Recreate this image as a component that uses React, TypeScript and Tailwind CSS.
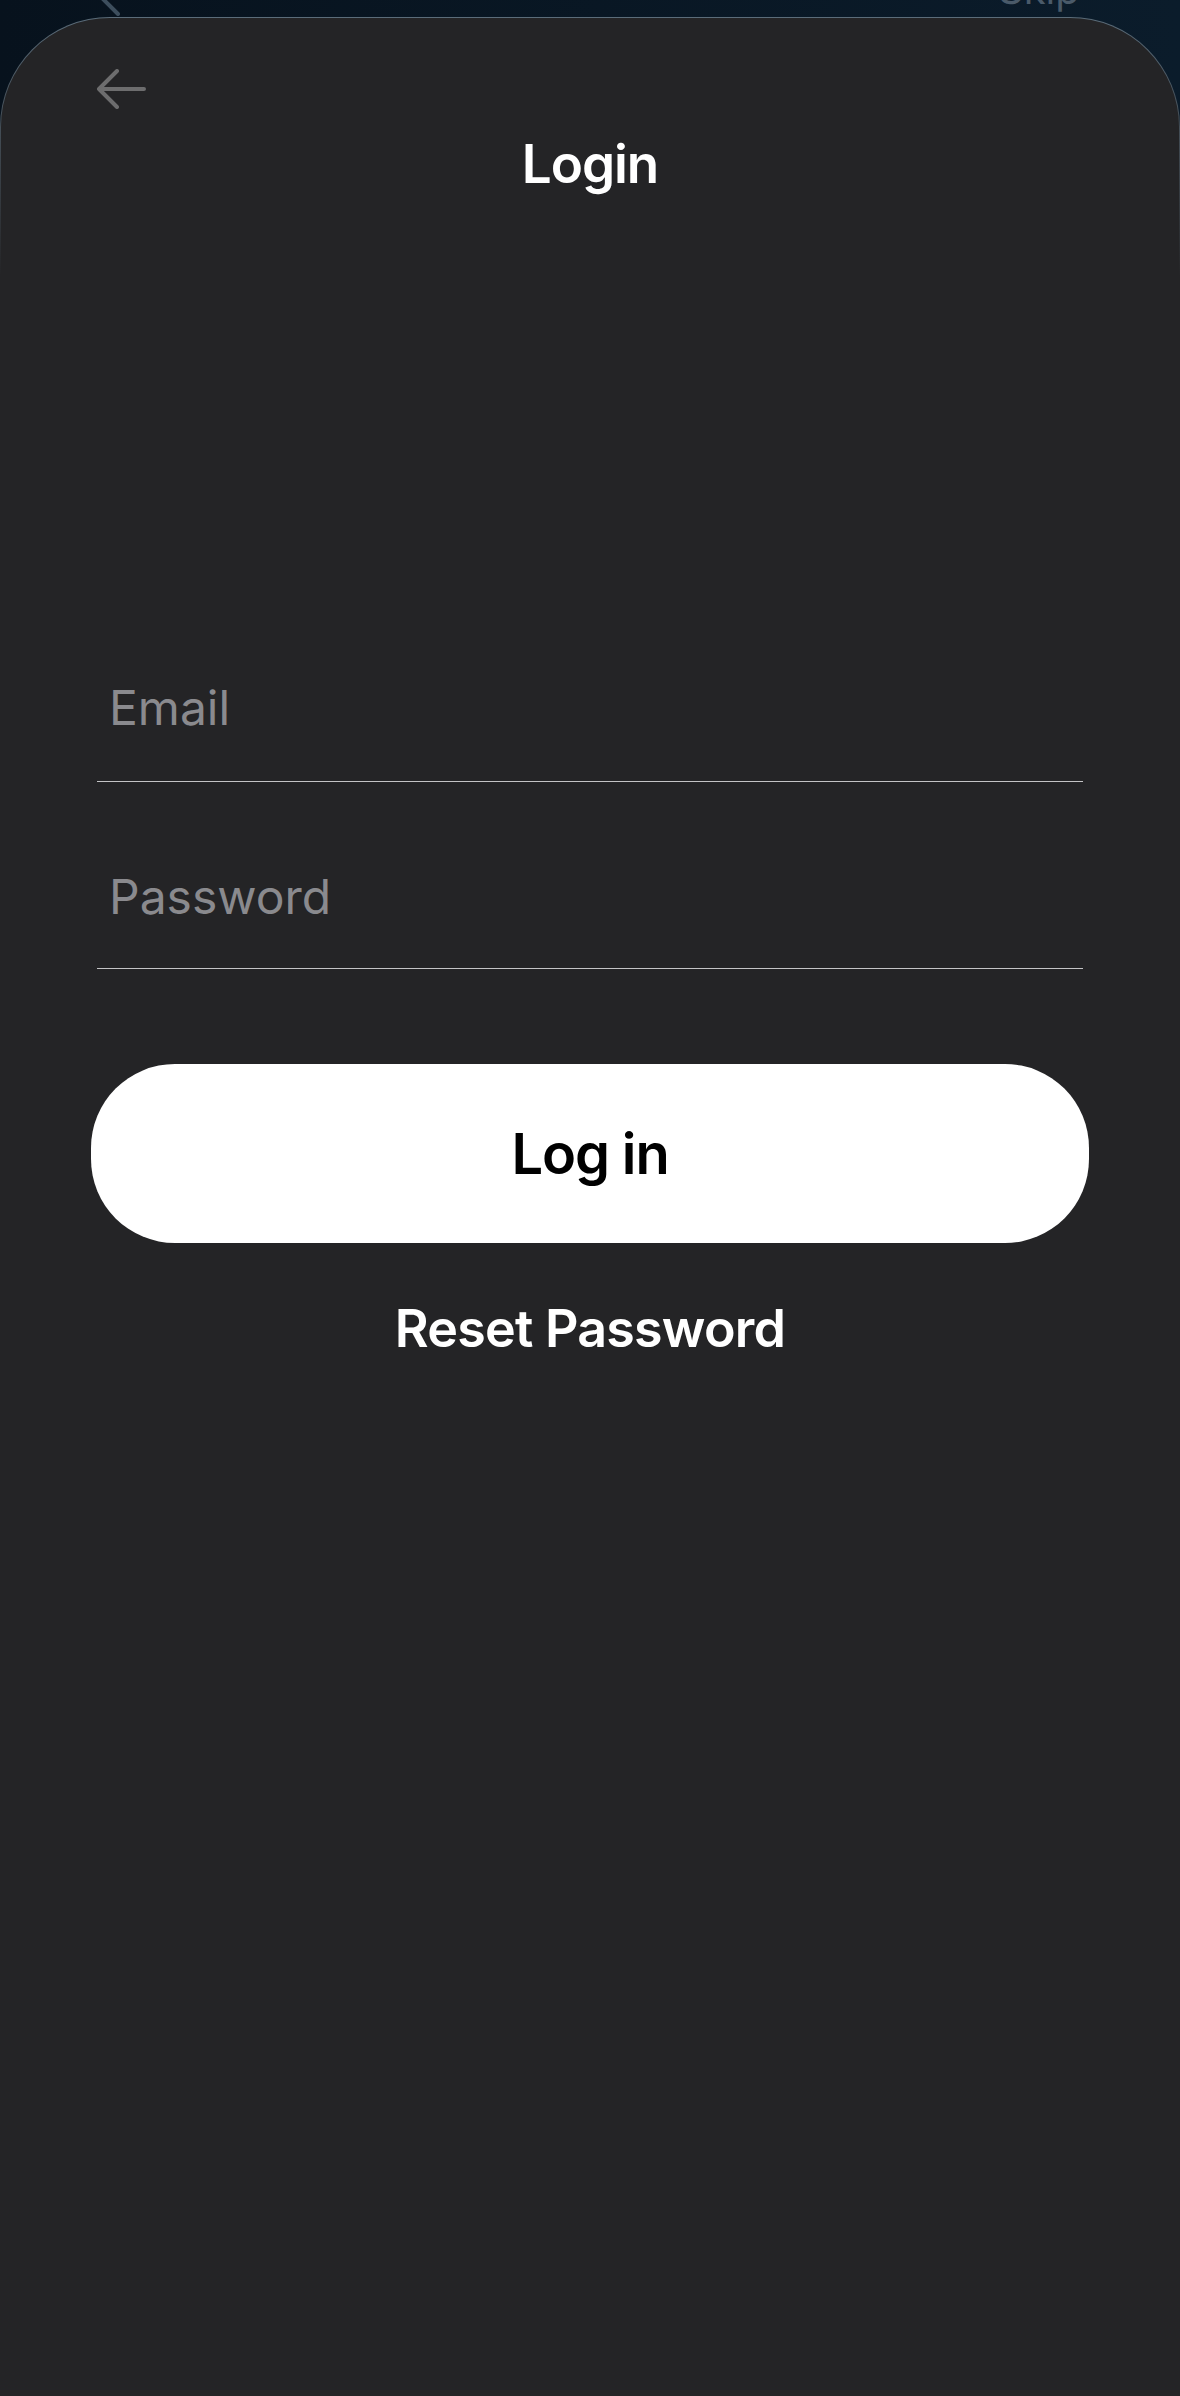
import { useState } from "react";

export default function App() {
  const [email, setEmail] = useState("");
  const [password, setPassword] = useState("");

  return (
    <div className="relative min-h-[2396px] w-full overflow-hidden bg-gradient-to-r from-[#07121d] to-[#0b1c2b] font-['Inter',sans-serif]">
      {/* screen behind the sheet, only its top edge peeks out */}
      <svg
        className="absolute left-[88px] top-[-40px]"
        width="40"
        height="56"
        viewBox="0 0 40 56"
        fill="none"
      >
        <polyline
          points="30,10 8,32 30,54"
          stroke="#3d4e5d"
          strokeWidth="4"
          strokeLinecap="round"
          strokeLinejoin="round"
        />
      </svg>
      <span className="absolute left-[998px] top-[-30px] text-[40px] leading-none text-[#4a5a69]">
        Skip
      </span>

      {/* sheet */}
      <div className="relative mt-[17px] rounded-t-[110px] bg-[linear-gradient(to_bottom,#5b6c79,#242426_260px)] px-px pt-px">
        <div className="flex min-h-[2378px] flex-col rounded-t-[109px] bg-[#242426] px-[96px]">
          <button className="-ml-px mt-[51px] h-[40px] w-[50px] self-start">
            <svg width="50" height="40" viewBox="0 0 50 40" fill="none">
              <path
                d="M48 20H3M21 2L3 20L21 38"
                stroke="#6d6d6e"
                strokeWidth="4"
                strokeLinecap="round"
                strokeLinejoin="round"
              />
            </svg>
          </button>

          <h1 className="mt-[29px] text-center text-[53px] font-semibold leading-none tracking-[-0.02em] text-white">
            Login
          </h1>

          <div className="mt-[492px] border-b border-[#c4c4c6] pb-[50px] pl-[12px]">
            <input
              value={email}
              onChange={(e) => setEmail(e.target.value)}
              placeholder="Email"
              className="h-[48px] w-full bg-transparent text-[48px] leading-none text-white outline-none placeholder:text-[#8a8a8e]"
            />
          </div>

          <div className="border-b border-[#c4c4c6] pb-[48px] pl-[12px] pt-[90px]">
            <input
              type="password"
              value={password}
              onChange={(e) => setPassword(e.target.value)}
              placeholder="Password"
              className="h-[48px] w-full bg-transparent text-[48px] leading-none text-white outline-none placeholder:text-[#8a8a8e]"
            />
          </div>

          <button className="-mx-[6px] mt-[95px] flex h-[179px] items-center justify-center rounded-[84px] bg-white text-[56px] font-semibold leading-none tracking-[-0.02em] text-black">
            Log in
          </button>

          <button className="mt-[60px] self-center text-[52px] font-semibold leading-none tracking-[-0.015em] text-white">
            Reset Password
          </button>
        </div>
      </div>
    </div>
  );
}
